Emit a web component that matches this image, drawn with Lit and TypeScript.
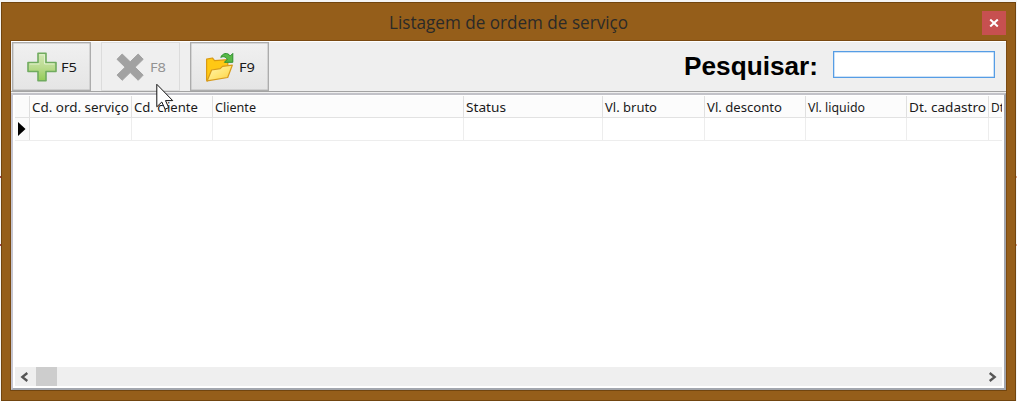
import { LitElement, html, css, svg } from "lit";
import { customElement, property } from "lit/decorators.js";

const plus = svg`
  <defs><linearGradient id="g" x1="0" y1="0" x2="0" y2="1"><stop offset="0" stop-color="#d2e8b4"/><stop offset=".5" stop-color="#bbdb90"/><stop offset="1" stop-color="#93cb55"/></linearGradient></defs>
  <path d="M11 1.2h8v9.3h10v9h-10v9.3h-8v-9.3h-10v-9h10z" fill="url(#g)" stroke="#70ab5f" stroke-width="1.6" stroke-linejoin="round"/>
  <path d="M12.5 2.8h5v9.2h10M2.7 12h9.8" fill="none" stroke="#e0f0cc" stroke-width="1"/>`;

const cross = svg`
  <path d="M6.2 2l8 7.8L22.2 2l5 5.3-8.1 7.9 8.1 7.9-5 5.2-8-7.8-8 7.8-5.2-5.2 8.1-7.9L1 7.3z" fill="#a2a2a2" stroke="#a2a2a2" stroke-width="1" stroke-linejoin="round"/>`;

const folder = svg`
  <defs><linearGradient id="f" x1="0" y1="0" x2="1" y2="1"><stop offset="0" stop-color="#fff6b4"/><stop offset=".6" stop-color="#ffe36c"/><stop offset="1" stop-color="#fdcb3c"/></linearGradient></defs>
  <path d="M1.6 28V7.2L7.4 6l2.2 2.6 13.2-.9v8L2 29z" fill="#ffc814" stroke="#d99a13" stroke-width="1.2" stroke-linejoin="round"/>
  <path d="M2.2 28.8L6.6 18l8.6-1.3 2.3-2.3 9.8-1.2-4.6 12.3z" fill="url(#f)" stroke="#d79b1c" stroke-width="1.2" stroke-linejoin="round"/>
  <path d="M15.8 5.4C17 1.5 22.5-.3 25.2 4l2.6-2.6v8.9h-8.4l2.7-2.8c-1-2.9-4-3.4-6.3-2.1z" fill="#58b947" stroke="#2f8f30" stroke-width="1" stroke-linejoin="round"/>`;

/** Single-line label drawn to a fixed advance width. */
@customElement("fit-label")
class FitLabel extends LitElement {
  @property() text = "";
  @property({ type: Number }) w = 0;
  @property({ type: Number }) h = 20;
  @property({ type: Number }) base = 15;
  static styles = css`
    :host { display: block; flex: none; }
    svg { display: block; overflow: visible; }
  `;
  render() {
    return html`<svg width=${this.w} height=${this.h}>
      <text x="0" y=${this.base} textLength=${this.w} lengthAdjust="spacingAndGlyphs" fill="currentColor">${this.text}</text>
    </svg>`;
  }
}

@customElement("app-root")
class AppRoot extends LitElement {
  columns: [string, number, number][] = [
    ["Cd. ord. serviço", 102, 97],
    ["Cd. cliente", 81, 64],
    ["Cliente", 251, 41],
    ["Status", 139, 40],
    ["Vl. bruto", 102, 52],
    ["Vl. desconto", 101, 75],
    ["Vl. liquido", 101, 57],
    ["Dt. cadastro", 82, 77],
    ["Dt", 14, 13],
  ];

  static styles = css`
    :host {
      display: block; width: 1017px; height: 401px; position: relative;
      box-sizing: border-box; padding: 2px 1px 0 1px; background: #f4f4f4;
      font-family: "Noto Sans", sans-serif; font-size: 13px; color: #1a1a1a; overflow: hidden;
    }
    * { box-sizing: border-box; }
    .window {
      height: 399px; background: #955e1a; border: 1px solid #71450f;
      display: flex; flex-direction: column; padding: 0 9px 9px;
    }
    .title { height: 37px; flex: none; display: grid; grid-template-columns: 1fr auto 1fr; }
    .caption { font: 18px "Open Sans", sans-serif; color: #2b2a28; }
    .close {
      justify-self: end; width: 24px; height: 24px; margin: 8px 0 0 0;
      background: #c75050; display: grid; place-items: center;
    }
    .client {
      flex: none; height: 351px; border: 1px solid #7a4a12; border-bottom-color: #71450f; background: #efefef;
      width: 997px; margin-left: -1px; display: flex; flex-direction: column;
    }
    .toolbar {
      height: 51px; flex: none; display: flex; border-top: 1px solid #fff;
      border-bottom: 1px solid #a3a3a3; padding-left: 1px;
    }
    .tool {
      width: 79px; height: 49px; margin-right: 10px; border: 1px solid #acacac;
      box-shadow: inset 0 0 0 .5px #bbb;
      background: linear-gradient(#f0f0f0, #e5e5e5); display: flex; padding: 9px 0 0 14px;
    }
    .tool.off { border-color: #dcdcdc; box-shadow: none; background: #efefef; color: #939393; }
    .tool fit-label { margin: 5px 0 0 4px; }
    .search { margin-left: auto; display: flex; padding: 9px 11px 0 0; }
    .search fit-label { font: bold 26px "Liberation Sans", sans-serif; color: #000; }
    .field { width: 162px; height: 27px; margin-left: 15px; border: 1px solid #569de5; background: #fff; box-shadow: inset 0 0 0 .5px #9cc5f0; }
    .grid {
      margin-top: 1px; flex: 1; background: #fff; border: 2px solid #a3a7af; border-top: 2px solid #c2c2c8;
      border-left-color: #c6c5cf; border-right-width: 2px; padding: 1px 2px 2px; display: flex; flex-direction: column;
    }
    .row { display: flex; height: 23px; flex: none; overflow: hidden; border-bottom: 1px solid #ededed; }
    .row.head { background: #fcfcfc; border-bottom-color: #e2e2e2; height: 22px; }
    .cell { flex: none; border-right: 1px solid #ededed; padding-left: 2px; overflow: hidden; }
    .cell:last-child { border-right: 0; }
    .head .cell { border-right-color: #e0e0e0; padding-left: 1.5px; }
    .mark { width: 15px; flex: none; border-right: 1px solid #dedede; background: #fbfbfb; }
    .mark svg { display: block; margin: 4px 0 0 3px; }
    .blank { flex: 1; }
    .scroll { height: 19px; flex: none; background: #efefef; display: flex; align-items: center; justify-content: space-between; padding: 0 5px 0 5px; }
    .left { display: flex; align-items: center; gap: 7px; }
    .thumb { width: 21px; height: 19px; background: #cdcdcd; }
    .cursor { position: absolute; left: 156px; top: 83px; }
    .tick { position: absolute; width: 1px; height: 2px; background: #a04048; }
    .tick.l { left: 0; } .tick.r { right: 0; background: #d9a58f; }
    .t1 { top: 176px; } .t2 { top: 244px; }
  `;

  tool(cls: string, icon: unknown, label: string) {
    return html`<div class="tool ${cls}">
      <svg width="30" height="30" viewBox="0 0 30 30">${icon}</svg>
      <fit-label text=${label} w="16" h="20" base="15"></fit-label>
    </div>`;
  }

  render() {
    return html`
      <div class="window">
        <div class="title">
          <span></span>
          <fit-label class="caption" text="Listagem de ordem de serviço" w="239" h="37" base="26"></fit-label>
          <div class="close"><svg width="10" height="8" viewBox="0 0 10 8"><path d="M1.2.5l7.6 7M8.8.5l-7.6 7" stroke="#fff" stroke-width="2"/></svg></div>
        </div>
        <div class="client">
          <div class="toolbar">
            ${this.tool("", plus, "F5")}${this.tool("off", cross, "F8")}${this.tool("", folder, "F9")}
            <div class="search">
              <fit-label text="Pesquisar:" w="134" h="32" base="24"></fit-label>
              <div class="field"></div>
            </div>
          </div>
          <div class="grid">
            <div class="row head">
              <div class="mark"></div>
              ${this.columns.map(([t, w, tw]) => html`<div class="cell" style="width:${w}px"><fit-label text=${t} w=${tw} h="20" base="16"></fit-label></div>`)}
            </div>
            <div class="row">
              <div class="mark"><svg width="8" height="14" viewBox="0 0 8 14"><path d="M0 0l7.5 7L0 14z" fill="#000"/></svg></div>
              ${this.columns.map(([, w]) => html`<div class="cell" style="width:${w}px"></div>`)}
            </div>
            <div class="blank"></div>
            <div class="scroll">
              <div class="left">
                <svg width="9" height="10" viewBox="0 0 9 10"><path d="M7.3 1L2.3 5l5 4" fill="none" stroke="#555" stroke-width="2.3"/></svg>
                <div class="thumb"></div>
              </div>
              <svg width="9" height="10" viewBox="0 0 9 10"><path d="M1.7 1l5 4-5 4" fill="none" stroke="#555" stroke-width="2.3"/></svg>
            </div>
          </div>
        </div>
      </div>
      <svg class="cursor" width="20" height="28" viewBox="0 0 20 28"><path d="M.8 1.3v22.5l5-4.8 3.3 7.2 3.6-1.6-3.2-7h7.2z" fill="#fff" stroke="#111" stroke-width="1"/></svg>
      <i class="tick l t1"></i><i class="tick l t2"></i><i class="tick r t1"></i><i class="tick r t2"></i>
    `;
  }
}
